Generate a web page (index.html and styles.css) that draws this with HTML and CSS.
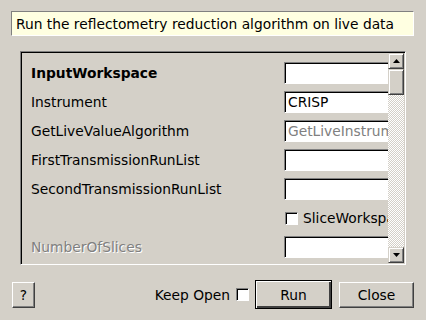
FILE: index.html
```html
<!DOCTYPE html>
<html>
<head>
  <meta charset="UTF-8">
  <title>Live Reflectometry Reduction</title>
  <link rel="stylesheet" href="styles.css">
</head>
<body>
  <div class="dialog">
    <div class="description">Run the reflectometry reduction algorithm on live data</div>

    <div class="frame">
      <div class="viewport">
        <div class="props">
          <label class="name required">InputWorkspace</label>
          <input class="field" type="text" value="">

          <label class="name">Instrument</label>
          <input class="field" type="text" value="CRISP">

          <label class="name">GetLiveValueAlgorithm</label>
          <input class="field muted" type="text" value="GetLiveInstrumentValue">

          <label class="name">FirstTransmissionRunList</label>
          <input class="field" type="text" value="">

          <label class="name">SecondTransmissionRunList</label>
          <input class="field" type="text" value="">

          <span class="name"></span>
          <label class="check-row"><span class="box"></span>SliceWorkspace</label>

          <label class="name disabled">NumberOfSlices</label>
          <input class="field" type="text" value="">
        </div>
      </div>

      <div class="scrollbar">
        <div class="arrow">
          <svg width="7" height="4" viewBox="0 0 7 4"><polygon points="3.5,0 7,4 0,4" fill="#000"/></svg>
        </div>
        <div class="track">
          <div class="thumb"></div>
        </div>
        <div class="arrow">
          <svg width="7" height="4" viewBox="0 0 7 4"><polygon points="0,0 7,0 3.5,4" fill="#000"/></svg>
        </div>
      </div>
    </div>

    <div class="footer">
      <button class="btn help">?</button>
      <div class="spacer"></div>
      <label class="keep">Keep Open <span class="box"></span></label>
      <button class="btn run">Run</button>
      <button class="btn close">Close</button>
    </div>
  </div>
</body>
</html>
```

FILE: styles.css
```css
* {
  box-sizing: border-box;
  font-family: "DejaVu Sans", Verdana, sans-serif;
  font-size: 13.8px;
}

body {
  margin: 0;
  background-color: #d4d0c8;
  color: #000;
}

.dialog {
  width: 426px;
  height: 320px;
  padding: 11px 12px 0 11px;
}

.description {
  height: 25px;
  padding: 4px 0 0 4px;
  background-color: #ffffe1;
  border: 1px solid;
  border-color: #808080 #fff #fff #808080;
  white-space: nowrap;
}

.frame {
  display: flex;
  width: 386px;
  height: 214px;
  margin: 15px 0 0 9px;
  border: 1px solid;
  border-color: #808080 #fff #fff #808080;
  box-shadow: inset 1px 1px #000, inset -1px -1px #d4d0c8;
  padding: 1px;
}

.viewport {
  flex: 1;
  overflow: hidden;
}

.props {
  display: grid;
  grid-template-columns: 253px 160px;
  grid-auto-rows: 22px;
  row-gap: 7px;
  padding: 9px 0 0 9px;
  align-items: center;
}

.name {
  white-space: nowrap;
}

.required {
  font-weight: bold;
}

.disabled {
  color: #808080;
  text-shadow: 1px 1px #fff;
}

.field {
  width: 140px;
  height: 22px;
  padding: 0 0 0 3px;
  margin: 0;
  background-color: #fff;
  border: 1px solid;
  border-color: #808080 #fff #fff #808080;
  box-shadow: inset 1px 1px #000;
  outline: none;
}

.muted {
  color: #808080;
}

.check-row {
  display: flex;
  align-items: center;
  gap: 5px;
  padding-left: 1px;
  white-space: nowrap;
}

.box {
  display: inline-block;
  width: 13px;
  height: 13px;
  background-color: #fff;
  border: 1px solid;
  border-color: #808080 #fff #fff #808080;
  box-shadow: inset 1px 1px #000;
}

.scrollbar {
  display: flex;
  flex-direction: column;
  width: 16px;
}

.arrow,
.thumb {
  height: 16px;
  display: flex;
  align-items: center;
  justify-content: center;
  background-color: #d4d0c8;
  border: 1px solid;
  border-color: #d4d0c8 #404040 #404040 #d4d0c8;
  box-shadow: inset 1px 1px #fff, inset -1px -1px #808080;
}

.track {
  flex: 1;
  background: repeating-conic-gradient(#fff 0 25%, #d4d0c8 0 50%) 0 0 / 2px 2px;
}

.thumb {
  height: 26px;
}

.footer {
  display: flex;
  align-items: center;
  margin-top: 15px;
  padding-left: 1px;
}

.spacer {
  flex: 1;
}

.btn {
  height: 26px;
  margin: 0;
  padding: 0;
  color: #000;
  background-color: #d4d0c8;
  border: 1px solid;
  border-color: #fff #404040 #404040 #fff;
  box-shadow: inset -1px -1px #808080;
}

.help {
  width: 23px;
}

.keep {
  display: flex;
  align-items: center;
  gap: 6px;
  margin-right: 6px;
}

.run {
  width: 77px;
  height: 29px;
  margin-right: 7px;
  border: 1px solid #000;
  box-shadow: inset 1px 1px #fff, inset -2px -2px #404040;
}

.close {
  width: 75px;
}
```
